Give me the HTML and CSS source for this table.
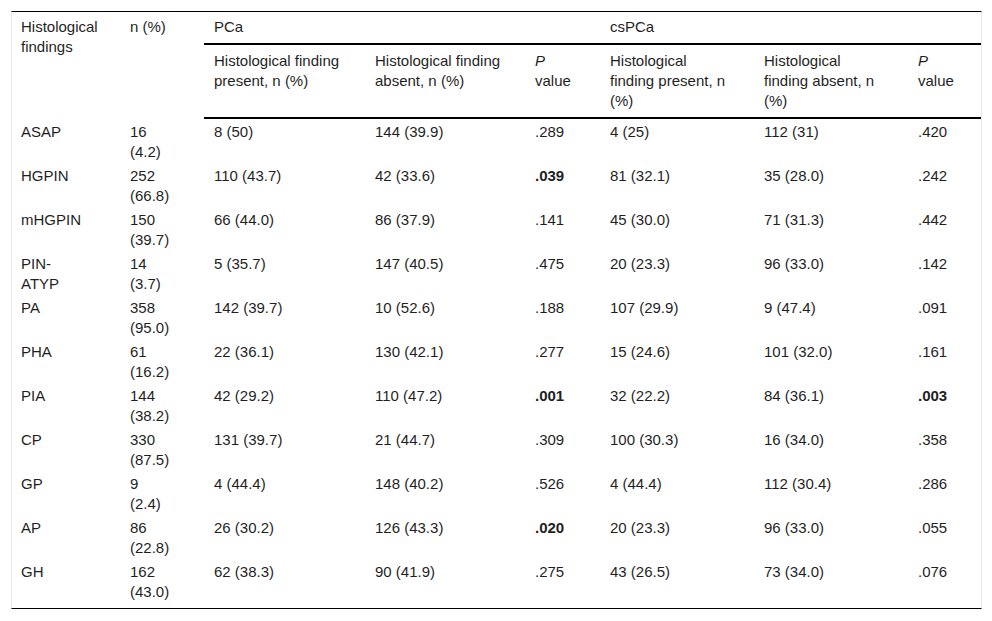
FILE: index.html
```html
<!DOCTYPE html>
<html lang="en">
<head>
<meta charset="utf-8">
<title>Histological findings</title>
<link rel="stylesheet" href="styles.css">
</head>
<body>
<div class="table-wrap">
  <table class="data-table">
    <colgroup>
      <col class="c-label">
      <col class="c-n">
      <col class="c-wide">
      <col class="c-wide2">
      <col class="c-p">
      <col class="c-mid">
      <col class="c-mid">
      <col class="c-p2">
    </colgroup>
    <thead>
      <tr class="head-top">
        <th rowspan="2" class="label span">Histological findings</th>
        <th rowspan="2" class="span">n (%)</th>
        <th colspan="3" class="group">PCa</th>
        <th colspan="3" class="group">csPCa</th>
      </tr>
      <tr class="head-sub">
        <th>Histological finding present, n (%)</th>
        <th>Histological finding absent, n (%)</th>
        <th><i>P</i> value</th>
        <th>Histological finding present, n (%)</th>
        <th>Histological finding absent, n (%)</th>
        <th><i>P</i> value</th>
      </tr>
    </thead>
    <tbody>
      <tr><td class="label">ASAP</td><td class="count">16 (4.2)</td><td>8 (50)</td><td>144 (39.9)</td><td>.289</td><td>4 (25)</td><td>112 (31)</td><td>.420</td></tr>
      <tr><td class="label">HGPIN</td><td class="count">252 (66.8)</td><td>110 (43.7)</td><td>42 (33.6)</td><td><b>.039</b></td><td>81 (32.1)</td><td>35 (28.0)</td><td>.242</td></tr>
      <tr><td class="label">mHGPIN</td><td class="count">150 (39.7)</td><td>66 (44.0)</td><td>86 (37.9)</td><td>.141</td><td>45 (30.0)</td><td>71 (31.3)</td><td>.442</td></tr>
      <tr><td class="label">PIN-ATYP</td><td class="count">14 (3.7)</td><td>5 (35.7)</td><td>147 (40.5)</td><td>.475</td><td>20 (23.3)</td><td>96 (33.0)</td><td>.142</td></tr>
      <tr><td class="label">PA</td><td class="count">358 (95.0)</td><td>142 (39.7)</td><td>10 (52.6)</td><td>.188</td><td>107 (29.9)</td><td>9 (47.4)</td><td>.091</td></tr>
      <tr><td class="label">PHA</td><td class="count">61 (16.2)</td><td>22 (36.1)</td><td>130 (42.1)</td><td>.277</td><td>15 (24.6)</td><td>101 (32.0)</td><td>.161</td></tr>
      <tr><td class="label">PIA</td><td class="count">144 (38.2)</td><td>42 (29.2)</td><td>110 (47.2)</td><td><b>.001</b></td><td>32 (22.2)</td><td>84 (36.1)</td><td><b>.003</b></td></tr>
      <tr><td class="label">CP</td><td class="count">330 (87.5)</td><td>131 (39.7)</td><td>21 (44.7)</td><td>.309</td><td>100 (30.3)</td><td>16 (34.0)</td><td>.358</td></tr>
      <tr><td class="label">GP</td><td class="count">9 (2.4)</td><td>4 (44.4)</td><td>148 (40.2)</td><td>.526</td><td>4 (44.4)</td><td>112 (30.4)</td><td>.286</td></tr>
      <tr><td class="label">AP</td><td class="count">86 (22.8)</td><td>26 (30.2)</td><td>126 (43.3)</td><td><b>.020</b></td><td>20 (23.3)</td><td>96 (33.0)</td><td>.055</td></tr>
      <tr><td class="label">GH</td><td class="count">162 (43.0)</td><td>62 (38.3)</td><td>90 (41.9)</td><td>.275</td><td>43 (26.5)</td><td>73 (34.0)</td><td>.076</td></tr>
    </tbody>
  </table>
</div>
</body>
</html>
```

FILE: styles.css
```css
html, body {
  margin: 0;
  padding: 0;
  background: #ffffff;
}

body {
  font-family: "Liberation Sans", Arial, sans-serif;
  font-size: 15px;
  line-height: 20px;
  color: #1f1f1f;
}

.table-wrap {
  width: 969px;
  margin: 11px 0 0 11px;
  padding-bottom: 5px;
  border-top: 1px solid #000000;
  border-bottom: 1px solid #000000;
  border-left: 1px solid #e8e8e8;
  border-right: 1px solid #e8e8e8;
}

.data-table {
  width: 969px;
  table-layout: fixed;
  border-collapse: separate;
  border-spacing: 0;
}

.c-label { width: 108px; }
.c-n { width: 84px; }
.c-wide { width: 161px; }
.c-wide2 { width: 160px; }
.c-p { width: 75px; }
.c-mid { width: 154px; }
.c-p2 { width: 73px; }

.data-table th,
.data-table td {
  text-align: left;
  vertical-align: top;
  font-weight: normal;
  padding: 3px 24px 1px 10px;
}

.data-table b {
  font-weight: bold;
}

.data-table .label {
  padding-left: 9px;
  padding-right: 32px;
}

.data-table .count {
  padding-right: 32px;
}

.head-top th {
  padding-top: 5px;
  padding-bottom: 6px;
}

.head-top .group {
  border-bottom: 2px solid #000000;
}

.head-sub th {
  padding-top: 6px;
  padding-bottom: 6px;
  border-bottom: 2px solid #000000;
}
```
